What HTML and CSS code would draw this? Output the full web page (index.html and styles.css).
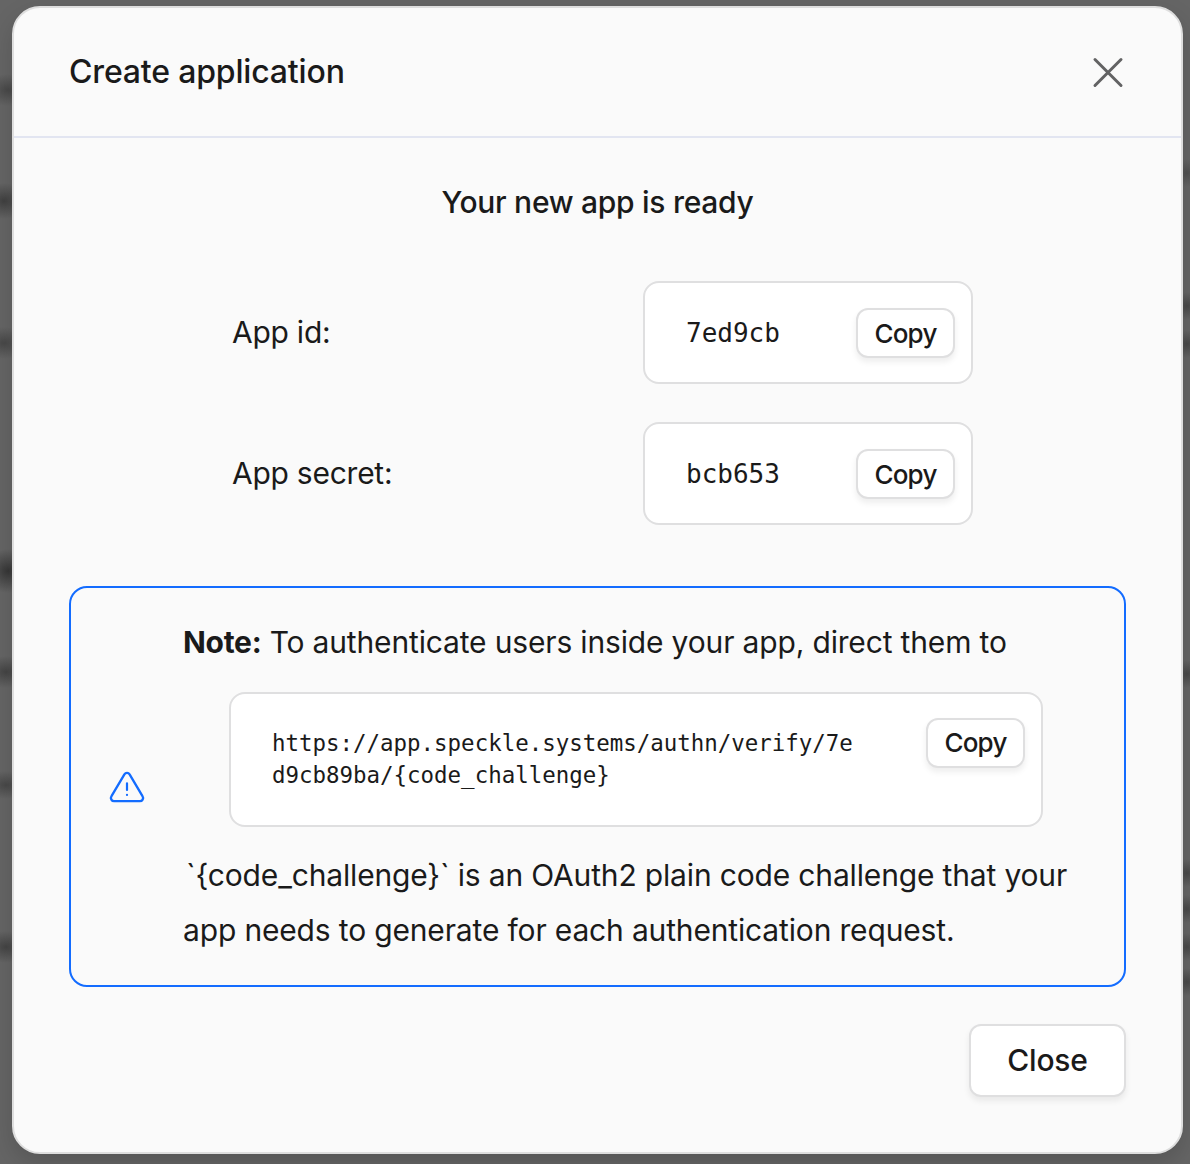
FILE: index.html
```html
<!DOCTYPE html>
<html lang="en">
<head>
<meta charset="utf-8">
<title>Create application</title>
<link rel="stylesheet" href="styles.css">
</head>
<body>
<main class="dialog">
  <header class="header">
    <h1 class="title">Create application</h1>
    <svg class="close-icon" viewBox="0 0 32 32" aria-label="Close"><path d="M3 3.5 29 29.5M29 3.5 3 29.5"/></svg>
  </header>
  <section class="content">
    <h2 class="ready">Your new app is ready</h2>
    <div class="fields">
      <span class="label">App id:</span>
      <div class="code-box"><code class="code">7ed9cb</code><button class="copy">Copy</button></div>
      <span class="label">App secret:</span>
      <div class="code-box"><code class="code">bcb653</code><button class="copy">Copy</button></div>
    </div>
    <div class="note">
      <svg class="warning" viewBox="0 0 36 34"><path d="M15.4 4.3 2.5 26.2a3.2 3.2 0 0 0 2.8 5h25.4a3.2 3.2 0 0 0 2.8-5L20.6 4.3a3.1 3.1 0 0 0-5.2 0Z"/><path class="mark" d="M18 13.3v6.6M18 24.8v.2"/></svg>
      <div class="note-body">
        <p class="text"><strong>Note:</strong> To authenticate users inside your app, direct them to</p>
        <div class="code-box url-box"><code class="code url">https://app.speckle.systems/authn/verify/7ed9cb89ba/{code_challenge}</code><button class="copy">Copy</button></div>
        <p class="text explanation">`{code_challenge}` is an OAuth2 plain code challenge that your app needs to generate for each authentication request.</p>
      </div>
    </div>
    <footer class="footer"><button class="close">Close</button></footer>
  </section>
</main>
</body>
</html>
```
FILE: styles.css
```css
* { box-sizing: border-box; }
body {
  margin: 0; height: 1164px; padding: 6px 7px 10px 12px; overflow: hidden;
  color: #1a1a1a; font-family: Inter, sans-serif; font-size: 30px;
  background:
    radial-gradient(ellipse 24px 16px at 8px 90px, #484848, transparent),
    radial-gradient(ellipse 24px 18px at 4px 201px, #404040, transparent),
    radial-gradient(ellipse 24px 16px at 4px 343px, #484848, transparent),
    radial-gradient(ellipse 24px 22px at 8px 571px, #363636, transparent),
    radial-gradient(ellipse 24px 16px at 6px 672px, #444, transparent),
    radial-gradient(ellipse 24px 14px at 6px 785px, #484848, transparent),
    radial-gradient(ellipse 24px 16px at 6px 947px, #444, transparent),
    radial-gradient(ellipse 14px 14px at 1187px 173px, #505050, transparent),
    radial-gradient(ellipse 14px 14px at 1187px 306px, #484848, transparent),
    radial-gradient(ellipse 14px 14px at 1187px 344px, #484848, transparent),
    radial-gradient(ellipse 14px 14px at 1187px 674px, #484848, transparent),
    radial-gradient(ellipse 14px 14px at 1187px 873px, #484848, transparent),
    radial-gradient(ellipse 14px 14px at 1187px 909px, #484848, transparent),
    radial-gradient(ellipse 14px 14px at 1187px 947px, #484848, transparent),
    radial-gradient(ellipse 14px 14px at 1187px 982px, #484848, transparent),
    #656565;
}
h1, h2, p { margin: 0; font-weight: 500; }
.dialog { height: 1148px; background: #fafafa; border: 2px solid #dedede; border-radius: 28px; box-shadow: 0 10px 24px rgba(0,0,0,.15); }
.header { height: 130px; display: flex; align-items: center; justify-content: space-between; padding: 0 57px 0 55px; border-bottom: 2px solid #e2e5f1; }
.title { font-size: 32px; line-height: 40px; letter-spacing: -.17px; }
.close-icon { width: 32px; height: 32px; fill: none; stroke: #626263; stroke-width: 3; stroke-linecap: round; }
.content { padding: 43px 55px 0; }
.ready { text-align: center; font-size: 30px; line-height: 42px; letter-spacing: -.28px; }
.fields { display: grid; grid-template-columns: 411px 330px; row-gap: 38px; align-items: center; padding: 58px 0 0 163px; }
.label { letter-spacing: -.25px; line-height: 36px; padding-bottom: 2px; }
.code-box { height: 103px; display: flex; align-items: flex-start; justify-content: space-between; padding: 25px 16px 0 41px; background: #fff; border: 2px solid #dfdfe0; border-radius: 16px; }
.code { font-family: "DejaVu Sans Mono", monospace; font-size: 26px; line-height: 50px; }
.copy, .close { font-family: Inter, sans-serif; font-weight: 500; color: #1a1a1a; background: #fff; border: 2px solid #dfdfe0; box-shadow: 0 4px 6px rgba(0,0,0,.07); padding: 0; }
.copy { width: 99px; height: 50px; font-size: 26px; letter-spacing: -.8px; border-radius: 12px; }
.note { height: 401px; margin-top: 61px; display: flex; align-items: center; border: 2px solid #136cff; border-radius: 18px; padding-left: 38px; }
.warning { width: 36px; height: 34px; margin-right: 38px; fill: none; stroke: #136cff; stroke-width: 2.3; stroke-linecap: round; stroke-linejoin: round; }
.mark { stroke-width: 2.2; }
.note-body { width: 905px; margin-bottom: 1px; }
.text { font-weight: 400; line-height: 55px; letter-spacing: -.16px; }
.text strong { font-weight: 700; letter-spacing: -.3px; }
.explanation { text-indent: 3px; }
.url-box { width: 814px; height: 135px; margin: 22px 0 21px 46px; padding-top: 24px; }
.url { width: 590px; font-size: 22.45px; line-height: 32px; word-break: break-all; padding-top: 9px; }
.footer { display: flex; justify-content: flex-end; padding-top: 37px; }
.close { width: 157px; height: 73px; font-size: 30px; border-radius: 12px; padding-bottom: 2px; letter-spacing: -.2px; }
```
